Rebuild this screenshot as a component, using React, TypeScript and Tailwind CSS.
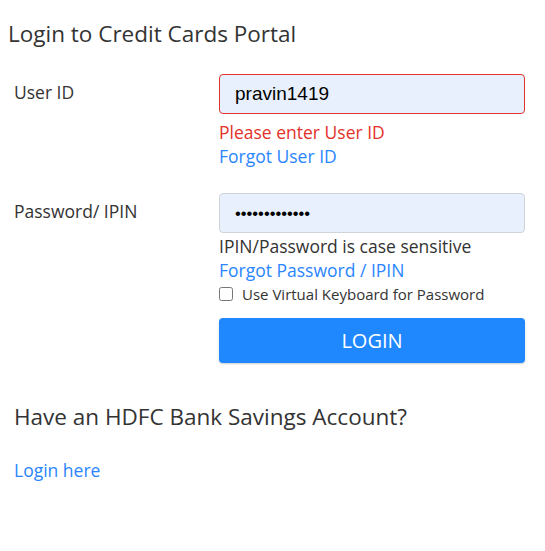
import React from "react";

const App = () => {
  return (
    <div className="min-h-[551px] w-[545px] bg-white font-['Open_Sans',sans-serif] text-[#333]">
      <h1 className="pl-2 pt-[17px] text-[22.5px] leading-[34px] font-normal">
        Login to Credit Cards Portal
      </h1>

      <div className="mt-[23px] grid grid-cols-[219px_306px]">
        {/* user id row */}
        <label className="pl-[14px] pt-[5px] text-[17.5px] leading-[26px]">User ID</label>
        <div className="flex flex-col">
          <input
            readOnly
            value="pravin1419"
            className="h-[40px] w-full rounded-[4px] border border-[#e0342c] bg-[#e8f0fe] px-[15px] font-['Liberation_Sans',Arial,sans-serif] text-[19px] text-black outline-none"
          />
          <span className="mt-[6px] text-[17.5px] leading-[24px] text-[#e4312a]">
            Please enter User ID
          </span>
          <a className="text-[17.5px] leading-[24px] text-[#2a85ff]">Forgot User ID</a>
        </div>

        {/* password row */}
        <label className="mt-[25px] pl-[14px] pt-[5px] text-[17.5px] leading-[26px]">
          Password/ IPIN
        </label>
        <div className="mt-[25px] flex flex-col">
          <input
            readOnly
            type="password"
            value="abcdefghijklm"
            className="h-[40px] w-full rounded-[4px] border border-[#cfd4da] bg-[#e8f0fe] px-[15px] font-['Liberation_Sans',Arial,sans-serif] text-[16.5px] text-black outline-none"
          />
          <span className="mt-[1px] text-[17.5px] leading-[24px] text-[#333]">
            IPIN/Password is case sensitive
          </span>
          <a className="text-[17.5px] leading-[24px] text-[#2a85ff]">Forgot Password / IPIN</a>
          <label className="mt-[1px] flex items-center gap-[9px] text-[15px] leading-[22px] text-[#333]">
            <input type="checkbox" className="m-0 h-[14px] w-[14px]" />
            Use Virtual Keyboard for Password
          </label>
          <button className="mt-[13px] h-[45px] w-full rounded-[4px] bg-[#2088ff] text-[20px] text-white shadow-[0_1px_2px_rgba(0,0,0,0.2)]">
            LOGIN
          </button>
        </div>
      </div>

      <h2 className="mt-[38px] pl-[14px] text-[22.5px] leading-[32px] font-normal">
        Have an HDFC Bank Savings Account?
      </h2>
      <a className="mt-[24px] block pl-[14px] text-[17.5px] leading-[26px] text-[#2a85ff]">
        Login here
      </a>
    </div>
  );
};

export default App;
